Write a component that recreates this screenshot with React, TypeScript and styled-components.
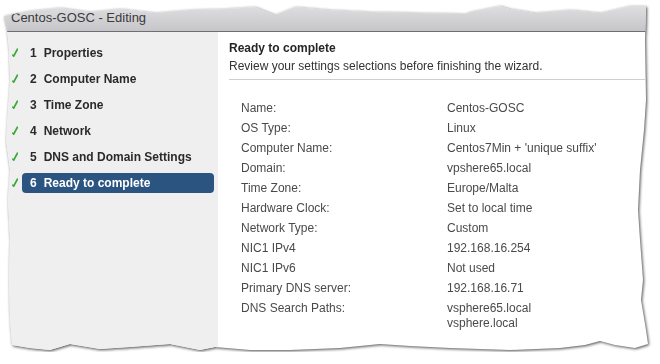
import * as React from "react";
import styled, { createGlobalStyle } from "styled-components";

const GlobalStyle = createGlobalStyle`
	html, body {
		margin: 0;
		background: #fff;
		font-family: "Liberation Sans", Arial, sans-serif;
	}
`;

const steps = [
	"Properties",
	"Computer Name",
	"Time Zone",
	"Network",
	"DNS and Domain Settings",
	"Ready to complete",
];

const summary: [string, string[]][] = [
	["Name:", ["Centos-GOSC"]],
	["OS Type:", ["Linux"]],
	["Computer Name:", ["Centos7Min + 'unique suffix'"]],
	["Domain:", ["vpshere65.local"]],
	["Time Zone:", ["Europe/Malta"]],
	["Hardware Clock:", ["Set to local time"]],
	["Network Type:", ["Custom"]],
	["NIC1 IPv4", ["192.168.16.254"]],
	["NIC1 IPv6", ["Not used"]],
	["Primary DNS server:", ["192.168.16.71"]],
	["DNS Search Paths:", ["vsphere65.local", "vsphere.local"]],
];

// torn paper outline, window-relative px
const tornEdge = [
	[0, 16], [10, 14], [26, 11], [56, 8], [86, 12], [116, 9], [151, 13], [186, 10],
	[221, 9], [251, 7], [271, 15], [291, 7], [326, 10], [366, 12], [416, 13], [461, 14],
	[466, 12], [496, 6], [506, 9], [531, 13], [566, 10], [596, 13], [626, 6], [642, 6],
	[641, 40], [642, 100], [640, 130], [636, 170], [634, 210], [636, 240], [639, 280],
	[637, 300], [642, 330], [644, 344],
	[631, 348], [611, 345], [596, 341], [581, 345], [556, 348], [506, 350], [446, 348],
	[406, 346], [376, 344], [336, 348], [286, 350], [246, 350], [211, 347], [196, 350],
	[166, 344], [126, 347], [96, 349], [66, 344], [46, 350], [26, 348], [8, 345],
	[6, 320], [5, 280], [6, 240], [4, 200], [6, 170], [2, 140], [4, 110], [6, 80],
	[5, 50], [3, 30],
]
	.map(([x, y]) => `${x}px ${y}px`)
	.join(", ");

const Check = () => (
	<svg width="6" height="9" viewBox="0 0 6 9">
		<path d="M0.9 7.2 L1.7 8.1 L5.4 1.2" fill="none" stroke="#3aa83a" strokeWidth="1.7" strokeLinecap="round" />
	</svg>
);

const App = () => {
	return (
		<>
			<GlobalStyle />
			<Shadow>
				<Window>
					<TitleBar>Centos-GOSC - Editing</TitleBar>
					<Body>
						<Sidebar>
							{steps.map((label, i) => (
								<Step key={label}>
									<CheckSlot>
										<Check />
									</CheckSlot>
									<Pill active={i === steps.length - 1}>
										<span>{i + 1}</span>
										<span>{label}</span>
									</Pill>
								</Step>
							))}
						</Sidebar>
						<Content>
							<Header>
								<h3>Ready to complete</h3>
								<p>Review your settings selections before finishing the wizard.</p>
							</Header>
							<Summary>
								{summary.map(([label, values]) => (
									<React.Fragment key={label}>
										<dt>{label}</dt>
										<dd>
											{values.map((v) => (
												<div key={v}>{v}</div>
											))}
										</dd>
									</React.Fragment>
								))}
							</Summary>
						</Content>
					</Body>
				</Window>
			</Shadow>
		</>
	);
};

const Shadow = styled.div`
	width: 646px;
	margin-left: 4px;
	filter: drop-shadow(1px 1px 1.5px rgba(0, 0, 0, 0.7));
`;

const Window = styled.div`
	height: 352px;
	display: flex;
	flex-direction: column;
	background: #fff;
	clip-path: polygon(${tornEdge});
`;

const TitleBar = styled.div`
	height: 32px;
	flex-shrink: 0;
	box-sizing: border-box;
	padding: 10px 0 0 7px;
	background: linear-gradient(#e4e4e6, #c6c6ca);
	border-bottom: 1px solid #6f6f6f;
	font-size: 13px;
	color: #3a3a3a;
`;

const Body = styled.div`
	flex: 1;
	display: grid;
	grid-template-columns: 214px 1fr;
`;

const Sidebar = styled.div`
	background: #efefef;
	padding-top: 8px;
`;

const Step = styled.div`
	height: 26px;
	display: flex;
	align-items: center;
`;

const CheckSlot = styled.div`
	width: 18px;
	padding-left: 8px;
	box-sizing: border-box;
	display: flex;
	margin-top: -2px;
`;

const Pill = styled.div<{ active: boolean }>`
	width: 192px;
	height: 20px;
	box-sizing: border-box;
	display: flex;
	align-items: center;
	gap: 7px;
	padding-left: 8px;
	border-radius: 4px;
	font-size: 12px;
	font-weight: bold;
	color: ${({ active }) => (active ? "#fff" : "#2a2a2a")};
	background: ${({ active }) => (active ? "#2c5481" : "transparent")};
`;

const Content = styled.div`
	padding: 8px 0 0 11px;
	color: #3c3c3c;
	font-size: 12px;
`;

const Header = styled.div`
	border-bottom: 1px solid #cfcfcf;
	padding-bottom: 5px;

	h3 {
		margin: 0;
		font-size: 12px;
		font-weight: bold;
		color: #262626;
		line-height: 16px;
	}

	p {
		margin: 2px 0 0;
		line-height: 16px;
		color: #333;
	}
`;

const Summary = styled.dl`
	display: grid;
	grid-template-columns: 206px 1fr;
	margin: 18px 0 0 12px;
	line-height: 20px;
	color: #4a4a4a;

	dt, dd {
		margin: 0;
	}

	dd div + div {
		margin-top: -5px;
	}
`;

export default App;
